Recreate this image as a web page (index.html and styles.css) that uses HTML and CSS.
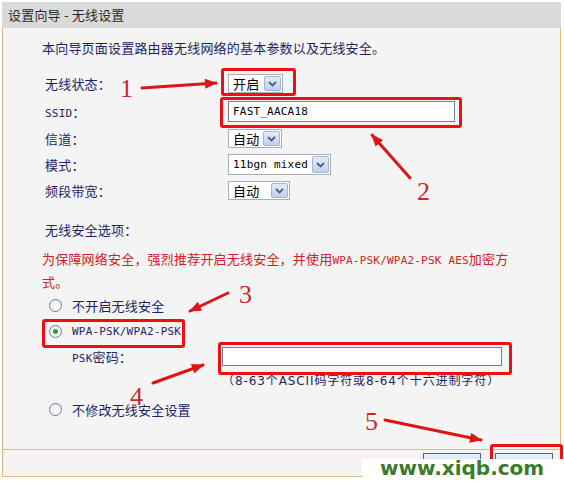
FILE: index.html
```html
<!DOCTYPE html>
<html lang="zh-CN">
  <head>
    <meta charset="UTF-8" />
    <title>设置向导 - 无线设置</title>
    <link rel="stylesheet" href="styles.css">
  </head>
  <body>
    <div class="frame">
      <div class="title-bar">设置向导 - 无线设置</div>

      <div class="panel">
        <p class="intro">本向导页面设置路由器无线网络的基本参数以及无线安全。</p>

        <div class="form-grid">
          <label>无线状态：</label>
          <div class="select sel-status">
            <span>开启</span>
            <i class="drop"><svg width="9" height="6" viewBox="0 0 9 6"><path d="M1 1 4.5 4.5 8 1" /></svg></i>
          </div>

          <label><span class="en">SSID</span>：</label>
          <input class="text-input ssid" type="text" value="FAST_AACA18" />

          <label>信道：</label>
          <div class="select sel-channel">
            <span>自动</span>
            <i class="drop"><svg width="9" height="6" viewBox="0 0 9 6"><path d="M1 1 4.5 4.5 8 1" /></svg></i>
          </div>

          <label>模式：</label>
          <div class="select sel-mode">
            <span class="en">11bgn mixed</span>
            <i class="drop"><svg width="9" height="6" viewBox="0 0 9 6"><path d="M1 1 4.5 4.5 8 1" /></svg></i>
          </div>

          <label>频段带宽：</label>
          <div class="select sel-width">
            <span>自动</span>
            <i class="drop"><svg width="9" height="6" viewBox="0 0 9 6"><path d="M1 1 4.5 4.5 8 1" /></svg></i>
          </div>
        </div>

        <p class="section-title">无线安全选项：</p>
        <p class="warning">为保障网络安全，强烈推荐开启无线安全，并使用<span class="en">WPA-PSK/WPA2-PSK AES</span>加密方式。</p>

        <div class="radio-row"><span class="radio"></span>不开启无线安全</div>
        <div class="radio-row"><span class="radio checked"></span><span class="en">WPA-PSK/WPA2-PSK</span></div>
        <div class="psk-row">
          <label><span class="en">PSK</span>密码：</label>
          <input class="text-input psk" type="password" value="" />
        </div>
        <div class="hint">（8-63个ASCII码字符或8-64个十六进制字符）</div>
        <div class="radio-row last"><span class="radio"></span>不修改无线安全设置</div>
      </div>

      <div class="footer">
        <button class="btn">上一步</button>
        <button class="btn">下一步</button>
      </div>
    </div>

    <!-- tutorial annotations drawn over the page -->
    <svg class="marks" width="564" height="482" viewBox="0 0 564 482">
      <defs>
        <marker id="head" viewBox="0 0 12 10" refX="11" refY="5" markerWidth="13" markerHeight="10" markerUnits="userSpaceOnUse" orient="auto">
          <path d="M0 0 12 5 0 10z" fill="#e01414" />
        </marker>
      </defs>
      <g class="boxes">
        <rect x="222.5" y="69.5" width="72" height="25" rx="1.5" />
        <rect x="221.5" y="98.5" width="239" height="28" rx="1.5" />
        <rect x="43.5" y="320.5" width="140" height="26" rx="1.5" />
        <rect x="219.5" y="343.5" width="291" height="30" rx="1.5" />
        <rect x="491.5" y="445.5" width="70" height="40" rx="1.5" />
      </g>
      <g class="arrows">
        <path d="M142 88 216 83" marker-end="url(#head)" />
        <path d="M410 178 372 135" marker-end="url(#head)" />
        <path d="M228 293 190 311" marker-end="url(#head)" />
        <path d="M153 383 203 365" marker-end="url(#head)" />
        <path d="M385 420 481 440" marker-end="url(#head)" />
      </g>
      <g class="nums">
        <text x="120" y="97">1</text>
        <text x="417" y="200">2</text>
        <text x="239" y="303">3</text>
        <text x="130" y="405">4</text>
        <text x="365" y="430">5</text>
      </g>
    </svg>

    <div class="watermark">www.xiqb.com</div>
  </body>
</html>
```

FILE: styles.css
```css
body {
  margin: 0;
  background: #fff;
  font-family: "Noto Sans CJK SC", sans-serif;
  font-size: 13px;
  letter-spacing: 0.2px;
  color: #1f1f6b;
}

p {
  margin: 0;
}

.en {
  font-family: "DejaVu Sans Mono", monospace;
  font-size: 11px;
}

.frame {
  width: 559px;
  margin: 2px 0 0 2px;
}

.title-bar {
  height: 26px;
  line-height: 26px;
  padding-left: 6px;
  background: #dadada;
  color: #2a2a2a;
}

.panel {
  height: 421px;
  background: #f4f4f4;
  border-left: 1px solid #e3b87f;
  border-right: 1px solid #e3b87f;
  border-bottom: 1px solid #e3b87f;
}

.intro {
  padding: 10px 0 0 39px;
  line-height: 20px;
}

.form-grid {
  display: grid;
  grid-template-columns: 183px auto;
  grid-template-rows: 27px 29px 25px 27px 25px;
  align-items: center;
  justify-items: start;
  margin: 12px 0 0 42px;
}

.select {
  display: flex;
  align-items: center;
  justify-content: space-between;
  box-sizing: border-box;
  height: 19px;
  padding: 0 1px 0 4px;
  border: 1px solid #a9b0b9;
  background: #fff;
  color: #000;
  line-height: 17px;
}

.sel-status { width: 55px; }
.sel-channel { width: 54px; }
.sel-mode { width: 103px; height: 21px; }
.sel-width { width: 62px; }

.drop {
  display: flex;
  align-items: center;
  justify-content: center;
  box-sizing: border-box;
  width: 17px;
  height: 15px;
  border: 1px solid #a2b6da;
  border-radius: 2px;
  background: linear-gradient(#e2ebf8, #bfd0ec);
}

.sel-mode .drop {
  height: 17px;
}

.drop path {
  fill: none;
  stroke: #4a5e86;
  stroke-width: 1.8;
}

.text-input {
  box-sizing: border-box;
  margin: 0;
  padding: 0 4px;
  border: 1px solid #76838f;
  background: #fff;
  color: #000;
  font-family: "DejaVu Sans Mono", monospace;
  font-size: 11px;
  letter-spacing: 0.2px;
}

.ssid {
  width: 227px;
  height: 21px;
}

.psk {
  width: 280px;
  height: 19px;
}

.section-title {
  margin: 17px 0 0 42px;
  line-height: 20px;
}

.warning {
  width: 472px;
  margin: 8px 0 0 39px;
  line-height: 21px;
  color: #d42020;
}

.radio-row {
  display: flex;
  align-items: center;
  gap: 10px;
  height: 26px;
  margin-left: 46px;
}

.radio-row:first-of-type {
  margin-top: 5px;
}

.radio-row.last {
  margin-top: 3px;
}

.radio {
  display: flex;
  align-items: center;
  justify-content: center;
  box-sizing: border-box;
  width: 13px;
  height: 13px;
  border: 1px solid #6f7f99;
  border-radius: 50%;
  background: radial-gradient(circle at 60% 60%, #fff, #e2e4ea);
}

.radio.checked::after {
  content: "";
  width: 5px;
  height: 5px;
  border-radius: 50%;
  background: #34a034;
}

.psk-row {
  display: flex;
  align-items: center;
  height: 25px;
  margin-left: 69px;
}

.psk-row label {
  width: 150px;
}

.hint {
  height: 24px;
  line-height: 24px;
  margin-left: 219px;
  font-family: "DejaVu Sans", "Noto Sans CJK SC", sans-serif;
  font-size: 12px;
  letter-spacing: 0.9px;
}

.footer {
  display: flex;
  justify-content: flex-end;
  align-items: flex-start;
  gap: 14px;
  height: 27px;
  box-sizing: border-box;
  padding: 3px 7px 0 0;
  background: #f4f4f4;
  border-left: 1px solid #e3b87f;
  border-right: 1px solid #e3b87f;
  border-bottom: 1px solid #e3b87f;
}

.btn {
  width: 58px;
  height: 22px;
  padding: 0;
  border: 1px solid #4a6690;
  background: linear-gradient(#e6eef9, #cedcf1);
  color: #1f1f6b;
  font-family: "Noto Sans CJK SC", sans-serif;
  font-size: 12px;
  letter-spacing: 3px;
}

.marks {
  position: absolute;
  top: 0;
  left: 0;
  pointer-events: none;
}

.marks .boxes rect {
  fill: none;
  stroke: #ee1010;
  stroke-width: 3;
}

.marks .arrows path {
  fill: none;
  stroke: #e01414;
  stroke-width: 3;
  stroke-linecap: round;
}

.marks .nums text {
  font-family: "Liberation Serif", serif;
  font-size: 26px;
  fill: #c62a2a;
}

.watermark {
  position: absolute;
  top: 459px;
  left: 362px;
  width: 184px;
  height: 23px;
  padding-left: 18px;
  background: #fff;
  color: #3b7b2b;
  font-family: "DejaVu Sans", sans-serif;
  font-weight: bold;
  font-size: 20px;
  line-height: 19px;
  letter-spacing: 0;
}
```
